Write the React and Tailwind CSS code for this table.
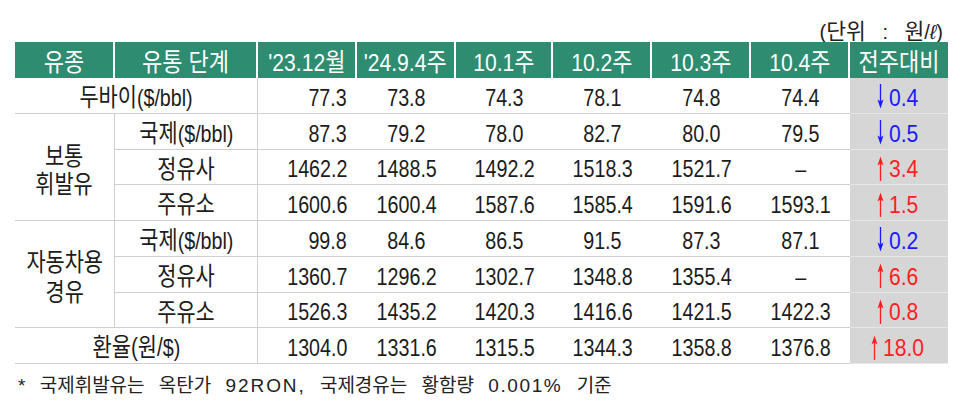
import React from "react";

const K = ({ children }) => <span className="text-[25.4px]">{children}</span>;

const groups = [
  {
    type: "single",
    label: [<K key="a">두바이</K>, "($/bbl)"],
    vals: ["77.3", "73.8", "74.3", "78.1", "74.8", "74.4"],
    d: ["down", "0.4"],
  },
  {
    type: "group",
    label: ["보통", "휘발유"],
    leading: "leading-[28px]",
    rows: [
      { label: [<K key="a">국제</K>, "($/bbl)"], vals: ["87.3", "79.2", "78.0", "82.7", "80.0", "79.5"], d: ["down", "0.5"] },
      { label: [<K key="a">정유사</K>], vals: ["1462.2", "1488.5", "1492.2", "1518.3", "1521.7", "–"], d: ["up", "3.4"] },
      { label: [<K key="a">주유소</K>], vals: ["1600.6", "1600.4", "1587.6", "1585.4", "1591.6", "1593.1"], d: ["up", "1.5"] },
    ],
  },
  {
    type: "group",
    label: ["자동차용", "경유"],
    leading: "leading-[30px]",
    rows: [
      { label: [<K key="a">국제</K>, "($/bbl)"], vals: ["99.8", "84.6", "86.5", "91.5", "87.3", "87.1"], d: ["down", "0.2"] },
      { label: [<K key="a">정유사</K>], vals: ["1360.7", "1296.2", "1302.7", "1348.8", "1355.4", "–"], d: ["up", "6.6"] },
      { label: [<K key="a">주유소</K>], vals: ["1526.3", "1435.2", "1420.3", "1416.6", "1421.5", "1422.3"], d: ["up", "0.8"] },
    ],
  },
  {
    type: "single",
    label: [<K key="a">환율(원/</K>, "$)"],
    vals: ["1304.0", "1331.6", "1315.5", "1344.3", "1358.8", "1376.8"],
    d: ["up", "18.0"],
  },
];

const headers = ["유종", "유통 단계", "'23.12월", "'24.9.4주", "10.1주", "10.2주", "10.3주", "10.4주", "전주대비"];

function HeaderText({ t }) {
  const m = t.match(/^([^가-힣]*)([가-힣 ]*)$/);
  const latin = m ? m[1] : "";
  const kor = m ? m[2] : t;
  return (
    <span className="inline-block scale-x-[0.88] origin-center leading-none text-[24px] whitespace-nowrap">
      {latin}
      <span className="text-[25px]">{kor}</span>
    </span>
  );
}

function Arrow({ up }) {
  return (
    <svg width="9" height="25" viewBox="0 0 9 25" className="block" fill="currentColor" stroke="currentColor">
      {up ? (
        <>
          <line x1="4.5" y1="6" x2="4.5" y2="25" strokeWidth="1.3" />
          <polygon points="1.5,9.5 4.5,0.5 7.5,9.5 4.5,7.4" stroke="none" />
        </>
      ) : (
        <>
          <line x1="4.5" y1="0" x2="4.5" y2="19" strokeWidth="1.3" />
          <polygon points="1.5,15.5 4.5,24.5 7.5,15.5 4.5,17.6" stroke="none" />
        </>
      )}
    </svg>
  );
}

function ValCells({ vals, d }) {
  const up = d[0] === "up";
  return (
    <>
      {vals.map((v, i) => (
        <div
          key={i}
          className={
            "border-b border-[#d0d0d0] flex items-center pt-[5px] " +
            (i === 0 ? "justify-end pr-[10px]" : "justify-center")
          }
        >
          <span
            className={
              "inline-block scale-x-[0.82] leading-none text-[24px] whitespace-nowrap " +
              (i === 0 ? "origin-right" : "origin-center")
            }
          >
            {v}
          </span>
        </div>
      ))}
      <div className="border-b border-[#e6e6e6] bg-[#d6d6d6] flex items-center justify-center pt-[3px]">
        <span
          className={
            "inline-flex items-center gap-[4px] pr-[2px] " + (up ? "text-[#ff1e1e]" : "text-[#1a1aff]")
          }
        >
          <Arrow up={up} />
          <span className="inline-block scale-x-[0.88] origin-left leading-none text-[24px] whitespace-nowrap pt-[2px] -mr-[3px]">
            {d[1]}
          </span>
        </span>
      </div>
    </>
  );
}

function Label({ parts }) {
  return (
    <span className="inline-block scale-x-[0.82] origin-center leading-none text-[24px] whitespace-nowrap">
      {parts}
    </span>
  );
}

export default function App() {
  return (
    <div className="w-[960px] h-[403px] bg-white overflow-hidden text-[#1c1c1c] font-['Liberation_Sans','Noto_Sans_CJK_KR',sans-serif]">
      <div className="h-[42px] flex justify-end items-start pr-[17px] pt-[21px]">
        <span className="text-[20px] leading-[22px] [word-spacing:11px] text-[#222] whitespace-nowrap">
          (<span className="text-[21.5px]">단위</span> : <span className="text-[21.5px]">원</span>/
          <span className="italic">ℓ</span>)
        </span>
      </div>
      <div className="ml-[15px] w-[933px] grid grid-cols-[100px_143px_99px_99px_97px_99px_99px_99px_98px] grid-rows-[36px_repeat(8,35.75px)]">
        {headers.map((h, i) => (
          <div
            key={i}
            className={
              "bg-[#2e8c70] text-white flex items-center justify-center pt-[4px] " +
              (i < headers.length - 1 ? "border-r-2 border-white" : "")
            }
          >
            <HeaderText t={h} />
          </div>
        ))}
        {groups.map((g, gi) => {
          if (g.type === "single") {
            return (
              <React.Fragment key={gi}>
                <div className="col-span-2 border-b border-r border-[#cfcfcf] flex items-center justify-center pt-[5px]">
                  <Label parts={g.label} />
                </div>
                <ValCells vals={g.vals} d={g.d} />
              </React.Fragment>
            );
          }
          return (
            <React.Fragment key={gi}>
              {g.rows.map((r, ri) => (
                <React.Fragment key={ri}>
                  {ri === 0 && (
                    <div className="row-span-3 border-b border-r border-[#cfcfcf] flex items-center justify-center pt-[6px]">
                      <span className={"inline-block scale-x-[0.82] origin-center text-[25.4px] text-center " + g.leading}>
                        {g.label[0]}
                        <br />
                        {g.label[1]}
                      </span>
                    </div>
                  )}
                  <div className="border-b border-r border-[#cfcfcf] flex items-center justify-center pt-[5px]">
                    <Label parts={r.label} />
                  </div>
                  <ValCells vals={r.vals} d={r.d} />
                </React.Fragment>
              ))}
            </React.Fragment>
          );
        })}
      </div>
      <div className="pl-[18px] pt-[9px] text-[19px] leading-[26px] [word-spacing:9px] text-[#222] whitespace-nowrap">
        <span className="text-[19px]">*</span> 국제휘발유는 옥탄가{" "}
        <span className="text-[19px] tracking-[1.9px]">92RON,</span> 국제경유는 황함량{" "}
        <span className="text-[19px] tracking-[1.6px]">0.001%</span> 기준
      </div>
    </div>
  );
}
